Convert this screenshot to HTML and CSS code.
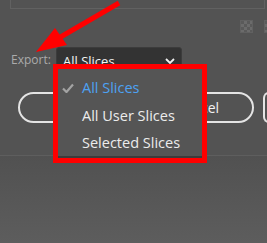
FILE: index.html
```html
<!DOCTYPE html>
<html>
<head>
<meta charset="utf-8">
<link rel="stylesheet" href="styles.css">
</head>
<body>
<div class="page">
  <div class="frame"></div>
  <div class="toolrow">
    <span class="checker"></span>
    <span class="checker partial"></span>
  </div>
  <div class="export-row">
    <span class="label">Export:</span>
    <div class="select">
      <span class="value">All Slices</span>
      <svg class="chev" width="10" height="6" viewBox="0 0 10 6"><path d="M1 1 L5 5 L9 1" fill="none" stroke="#f0f0f0" stroke-width="1.8"/></svg>
    </div>
  </div>
  <div class="buttons">
    <div class="btn save"></div>
    <div class="btn cancel">Cancel</div>
    <div class="btn extra"></div>
  </div>
  <div class="divider"></div>
  <div class="footer"></div>

  <div class="menu">
    <div class="item active">
      <svg class="check" width="12" height="10" viewBox="0 0 12 10"><path d="M1 5.5 L4.5 9 L11 1.5" fill="none" stroke="#a3a3a3" stroke-width="2.2"/></svg>
      <span>All Slices</span>
    </div>
    <div class="item"><span>All User Slices</span></div>
    <div class="item"><span>Selected Slices</span></div>
  </div>

  <svg class="arrow" width="267" height="243" viewBox="0 0 267 243">
    <line x1="119" y1="3" x2="52" y2="42" stroke="#ff0000" stroke-width="5"/>
    <polygon points="36,52 55,28 67,45" fill="#ff0000"/>
  </svg>
</div>
</body>
</html>
```
FILE: styles.css
```css
html, body {
  margin: 0;
  padding: 0;
}
body {
  width: 267px;
  height: 243px;
  overflow: hidden;
  background: #535353;
  font-family: "Open Sans", "Noto Sans", sans-serif;
}
.page {
  position: relative;
  width: 267px;
  height: 243px;
  overflow: hidden;
  display: flex;
  flex-direction: column;
}
.frame {
  margin-left: 10px;
  width: 253px;
  height: 8px;
  flex: none;
  border-left: 1px solid #616161;
  border-right: 1px solid #616161;
  border-bottom: 1px solid #616161;
}
.toolrow {
  margin-top: 11px;
  height: 13px;
  display: flex;
  gap: 11px;
  padding-left: 240px;
  flex: none;
}
.checker {
  width: 13px;
  height: 13px;
  flex: none;
  box-sizing: border-box;
  border: 1px solid #616161;
  background-color: #5a5a5a;
  background-image:
    linear-gradient(45deg, #6b6b6b 25%, transparent 25%, transparent 75%, #6b6b6b 75%),
    linear-gradient(45deg, #6b6b6b 25%, transparent 25%, transparent 75%, #6b6b6b 75%);
  background-size: 6px 6px;
  background-position: 0 0, 3px 3px;
}
.checker.partial {
  width: 3px;
  border-right: none;
}
.export-row {
  margin-top: 14px;
  height: 23px;
  display: flex;
  align-items: center;
  flex: none;
}
.label {
  margin-left: 11px;
  width: 45px;
  font-size: 12px;
  color: #ababab;
  padding-top: 2px;
}
.select {
  width: 126px;
  height: 23px;
  box-sizing: border-box;
  background: #333333;
  border: 1px solid #3c3c3c;
  border-radius: 3px;
  display: flex;
  align-items: center;
  justify-content: space-between;
  padding: 0 6px 0 6px;
}
.value {
  color: #f4f4f4;
  font-size: 13px;
  padding-top: 4px;
}
.chev {
  margin-top: 4px;
}
.buttons {
  margin-top: 22px;
  height: 31px;
  display: flex;
  gap: 9px;
  padding-left: 18px;
  flex: none;
}
.btn {
  height: 31px;
  box-sizing: border-box;
  border: 2px solid #e4e4e4;
  border-radius: 16px;
  color: #f2f2f2;
  font-size: 14px;
  display: flex;
  align-items: center;
  justify-content: center;
  flex: none;
}
.save { width: 110px; }
.cancel { width: 117px; padding-left: 4px; }
.extra {
  width: 6px;
  border-right: none;
  border-radius: 16px 0 0 16px;
}
.divider {
  margin-top: 32px;
  height: 1px;
  background: #5e5e5e;
  flex: none;
}
.footer {
  flex: 1;
  background: linear-gradient(to bottom, #515151, #5d5d5d);
}
.menu {
  position: absolute;
  left: 53px;
  top: 64px;
  width: 154px;
  height: 99px;
  box-sizing: border-box;
  border: 5px solid #ff0000;
  background: #555555;
  padding-top: 5px;
  box-shadow: inset 0 -2px 0 #3c3c3c;
}
.item {
  position: relative;
  height: 27.5px;
  display: flex;
  align-items: center;
  padding-left: 24px;
  font-size: 14.5px;
  color: #ececec;
}
.item.active { color: #4da2f3; }
.check {
  position: absolute;
  left: 4px;
  top: 9px;
}
.arrow {
  position: absolute;
  left: 0;
  top: 0;
  pointer-events: none;
}
```
